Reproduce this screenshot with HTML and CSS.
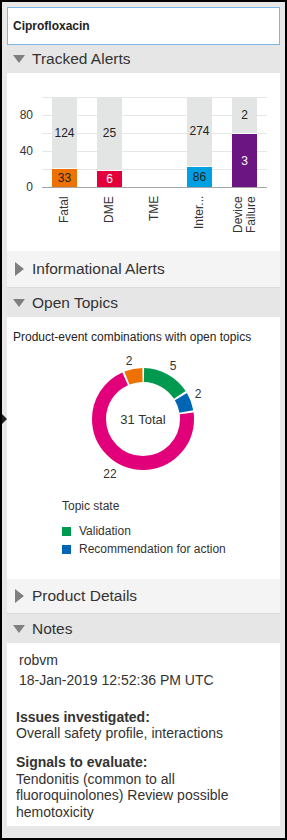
FILE: index.html
```html
<!DOCTYPE html>
<html lang="en">
<head>
  <meta charset="UTF-8" />
  <meta name="viewport" content="width=device-width, initial-scale=1" />
  <title>Ciprofloxacin</title>
  <link rel="stylesheet" href="styles.css">
</head>
<body>
  <div class="frame">
    <span class="edge-tab"></span>

    <div class="search">Ciprofloxacin</div>

    <!-- Tracked alerts -->
    <div class="panel-head">
      <span class="caret"><span class="tri-down"></span></span>
      Tracked Alerts
    </div>
    <div class="panel-body chart-body">
      <div class="chart">
        <div class="y-axis">
          <span>80</span>
          <span>40</span>
          <span>0</span>
        </div>
        <div class="plot">
          <div class="col">
            <div class="bar">
              <div class="seg rest">124</div>
              <div class="seg fatal" style="height: 21%">33</div>
            </div>
          </div>
          <div class="col">
            <div class="bar">
              <div class="seg rest">25</div>
              <div class="seg dme" style="height: 19.4%">6</div>
            </div>
          </div>
          <div class="col"></div>
          <div class="col">
            <div class="bar">
              <div class="seg rest">274</div>
              <div class="seg inter" style="height: 23.9%">86</div>
            </div>
          </div>
          <div class="col">
            <div class="bar">
              <div class="seg rest">2</div>
              <div class="seg device" style="height: 60%">3</div>
            </div>
          </div>
        </div>
      </div>
      <div class="x-labels">
        <div class="xcol"><span class="xlab">Fatal</span></div>
        <div class="xcol"><span class="xlab">DME</span></div>
        <div class="xcol"><span class="xlab">TME</span></div>
        <div class="xcol"><span class="xlab">Inter...</span></div>
        <div class="xcol"><span class="xlab">Device Failure</span></div>
      </div>
    </div>

    <div class="panel-head collapsed tall">
      <span class="caret"><span class="tri-right"></span></span>
      Informational Alerts
    </div>

    <!-- Open topics -->
    <div class="panel-head lined">
      <span class="caret"><span class="tri-down"></span></span>
      Open Topics
    </div>
    <div class="panel-body topics-body">
      <p class="intro">Product-event combinations with open topics</p>
      <svg class="donut" width="273" height="135" viewBox="0 0 273 135">
        <g fill="none" stroke-width="14" transform="rotate(-90 136 71)">
          <circle cx="136" cy="71" r="44" stroke="#00994f" stroke-dasharray="42.59 300" stroke-dashoffset="-1" />
          <circle cx="136" cy="71" r="44" stroke="#0065b2" stroke-dasharray="15.84 300" stroke-dashoffset="-45.59" />
          <circle cx="136" cy="71" r="44" stroke="#e2007a" stroke-dasharray="194.2 300" stroke-dashoffset="-63.43" />
          <circle cx="136" cy="71" r="44" stroke="#ee7203" stroke-dasharray="15.84 300" stroke-dashoffset="-259.62" />
        </g>
        <g class="donut-text">
          <text x="122" y="17" text-anchor="middle">2</text>
          <text x="166" y="22" text-anchor="middle">5</text>
          <text x="191" y="50" text-anchor="middle">2</text>
          <text x="103" y="130" text-anchor="middle">22</text>
          <text class="total" x="136" y="76" text-anchor="middle">31 Total</text>
        </g>
      </svg>
      <div class="legend">
        <div class="legend-title">Topic state</div>
        <div class="legend-item"><span class="swatch validation"></span>Validation</div>
        <div class="legend-item"><span class="swatch recommend"></span>Recommendation for action</div>
      </div>
    </div>

    <div class="panel-head collapsed">
      <span class="caret"><span class="tri-right"></span></span>
      Product Details
    </div>

    <!-- Notes -->
    <div class="panel-head lined">
      <span class="caret"><span class="tri-down"></span></span>
      Notes
    </div>
    <div class="panel-body notes-body">
      <div class="note-meta">
        <div>robvm</div>
        <div>18-Jan-2019 12:52:36 PM UTC</div>
      </div>
      <div class="note-block">
        <div class="note-label">Issues investigated:</div>
        <div>Overall safety profile, interactions</div>
      </div>
      <div class="note-block loose">
        <div class="note-label">Signals to evaluate:</div>
        <div>Tendonitis (common to all fluoroquinolones) Review possible hemotoxicity</div>
      </div>
    </div>
  </div>
</body>
</html>
```

FILE: styles.css
```css
* {
  box-sizing: border-box;
}

body {
  margin: 0;
  padding: 0;
  width: 287px;
  height: 840px;
  font-family: "Liberation Sans", Arial, sans-serif;
  color: #333333;
  background: #ffffff;
}

.frame {
  position: relative;
  width: 287px;
  height: 840px;
  border: 2px solid #000000;
  padding: 5px 5px 0 5px;
  background-color: #e8e8e8;
  overflow: hidden;
}

.edge-tab {
  position: absolute;
  left: -1px;
  top: 411px;
  width: 0;
  height: 0;
  border-top: 6px solid transparent;
  border-bottom: 6px solid transparent;
  border-left: 6px solid #1e1e1e;
}

.search {
  height: 38px;
  border: 1px solid #7ab7e2;
  background: #ffffff;
  padding: 0 5px;
  font-size: 12px;
  font-weight: bold;
  color: #222222;
  display: flex;
  align-items: center;
}

/* Section headers */
.panel-head {
  height: 28px;
  display: flex;
  align-items: center;
  padding-left: 5px;
  font-size: 15.5px;
  color: #333333;
  background-color: #e6e6e6;
}

.panel-head.lined {
  height: 30px;
  border-top: 1px solid #d9d9d9;
}

.panel-head.collapsed {
  height: 34px;
  background-color: #f4f4f4;
}

.panel-head.tall {
  height: 36px;
}

.caret {
  width: 14px;
  display: flex;
  justify-content: center;
  margin-right: 6px;
}

.tri-down {
  width: 0;
  height: 0;
  border-left: 6.5px solid transparent;
  border-right: 6.5px solid transparent;
  border-top: 8px solid #7f7f7f;
}

.tri-right {
  width: 0;
  height: 0;
  border-top: 7px solid transparent;
  border-bottom: 7px solid transparent;
  border-left: 9px solid #7f7f7f;
}

.panel-body {
  background: #ffffff;
}

/* Bar chart */
.chart-body {
  height: 178px;
  padding-top: 24px;
}

.chart {
  display: flex;
  align-items: flex-start;
  font-size: 12px;
}

.y-axis {
  width: 35px;
  height: 91px;
  padding-right: 9px;
  display: flex;
  flex-direction: column;
  align-items: flex-end;
  line-height: 36px;
}

.plot {
  width: 225px;
  height: 91px;
  display: flex;
  border-bottom: 1px solid #a6a6a6;
  background: repeating-linear-gradient(to bottom, #e6e6e6 0, #e6e6e6 1px, transparent 1px, transparent 18px);
}

.col {
  width: 45px;
  display: flex;
  justify-content: center;
}

.bar {
  width: 25px;
  height: 90px;
  display: flex;
  flex-direction: column;
}

.seg {
  display: flex;
  align-items: center;
  justify-content: center;
  color: #222222;
}

.seg.rest {
  flex: 1;
  background-color: #e3e5e5;
}

.seg.fatal {
  background-color: #ee7203;
  border-top: 1px solid #ffffff;
}

.seg.dme {
  background-color: #e4003a;
  border-top: 1px solid #ffffff;
  color: #ffffff;
}

.seg.inter {
  background-color: #00a0e2;
  border-top: 1px solid #ffffff;
}

.seg.device {
  background-color: #6a1581;
  border-top: 1px solid #ffffff;
  color: #ffffff;
}

.x-labels {
  display: flex;
  margin-left: 35px;
  margin-top: 8px;
}

.xcol {
  width: 45px;
  display: flex;
  justify-content: center;
}

.xlab {
  writing-mode: vertical-rl;
  transform: rotate(180deg);
  text-align: end;
  height: 40px;
  font-size: 12px;
  line-height: 13px;
  color: #333333;
}

/* Open topics */
.topics-body {
  height: 262px;
  padding-top: 13px;
}

.intro {
  margin: 0;
  padding-left: 6px;
  font-size: 12px;
  line-height: 15px;
  color: #222222;
}

.donut {
  display: block;
  margin-top: 3px;
}

.donut-text text {
  font-family: "Liberation Sans", Arial, sans-serif;
  font-size: 12px;
  fill: #333333;
}

.donut-text .total {
  font-size: 13px;
}

.legend {
  margin-top: 16px;
  padding-left: 55px;
  font-size: 12px;
  line-height: 15px;
  color: #333333;
}

.legend-title {
  margin-bottom: 10px;
}

.legend-item {
  display: flex;
  align-items: center;
  gap: 8px;
  margin-bottom: 3px;
}

.swatch {
  width: 9px;
  height: 9px;
}

.swatch.validation {
  background-color: #009a4f;
}

.swatch.recommend {
  background-color: #0066b3;
}

/* Notes */
.notes-body {
  height: 183px;
  padding: 7px 24px 0 9px;
  font-size: 14px;
  color: #333333;
}

.note-meta {
  padding-left: 3px;
  line-height: 20px;
}

.note-block {
  margin-top: 19px;
  line-height: 16px;
}

.note-block.loose {
  margin-top: 13px;
  line-height: 16.5px;
}

.note-label {
  font-weight: bold;
}
```
